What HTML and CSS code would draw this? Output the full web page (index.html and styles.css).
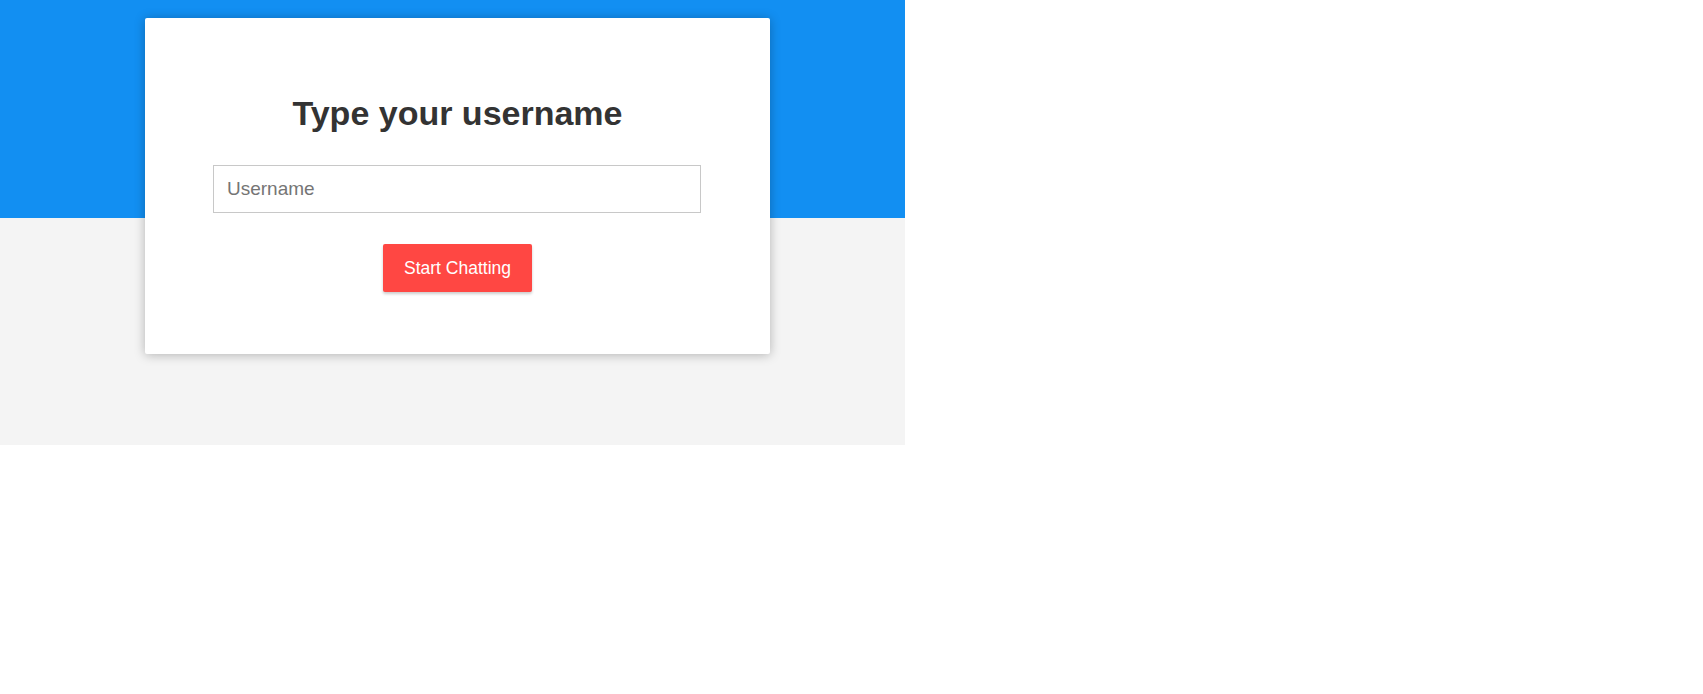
FILE: index.html
```html
<!DOCTYPE html>
<html lang="en">
<head>
<meta charset="utf-8">
<title>Spring Boot WebSocket Chat</title>
<link rel="stylesheet" href="styles.css">
</head>
<body>
<div class="page">
  <div class="card">
    <h2 class="title">Type your username</h2>
    <form class="form">
      <input class="field" type="text" placeholder="Username" autocomplete="off">
      <button class="btn" type="button">Start Chatting</button>
    </form>
  </div>
</div>
</body>
</html>
```
FILE: styles.css
```css
* { box-sizing: border-box; }
html, body { margin: 0; padding: 0; background: #fff; }
body {
  font-family: "Liberation Sans", Arial, Helvetica, sans-serif;
  color: #333;
}
.page {
  width: 905px;
  height: 445px;
  background: linear-gradient(to bottom, #128ff2 0, #128ff2 218px, #f4f4f4 218px, #f4f4f4 100%);
  padding: 18px 0 0 145px;
}
.card {
  width: 625px;
  height: 336px;
  background: #fff;
  border-radius: 2px;
  box-shadow: 0 1px 11px rgba(0, 0, 0, 0.27);
  padding: 75px 68px 0 68px;
  display: flex;
  flex-direction: column;
  align-items: center;
}
.title {
  margin: 0;
  font-size: 34px;
  line-height: 40px;
  font-weight: 700;
  color: #333;
}
.form {
  margin-top: 32px;
  width: 100%;
  display: flex;
  flex-direction: column;
  align-items: center;
  gap: 31px;
}
.field {
  align-self: flex-start;
  width: 488px;
  height: 48px;
  border: 1px solid #c8c8c8;
  border-radius: 0;
  padding: 0 13px;
  font-family: inherit;
  font-size: 19px;
  color: #333;
  outline: none;
}
.field::placeholder { color: #757575; }
.btn {
  width: 149px;
  height: 48px;
  border: none;
  border-radius: 2px;
  background: #ff4743;
  color: #fff;
  font-family: inherit;
  font-size: 17.5px;
  box-shadow: 0 2px 3px rgba(0, 0, 0, 0.2);
  padding: 0;
  cursor: pointer;
}
```
